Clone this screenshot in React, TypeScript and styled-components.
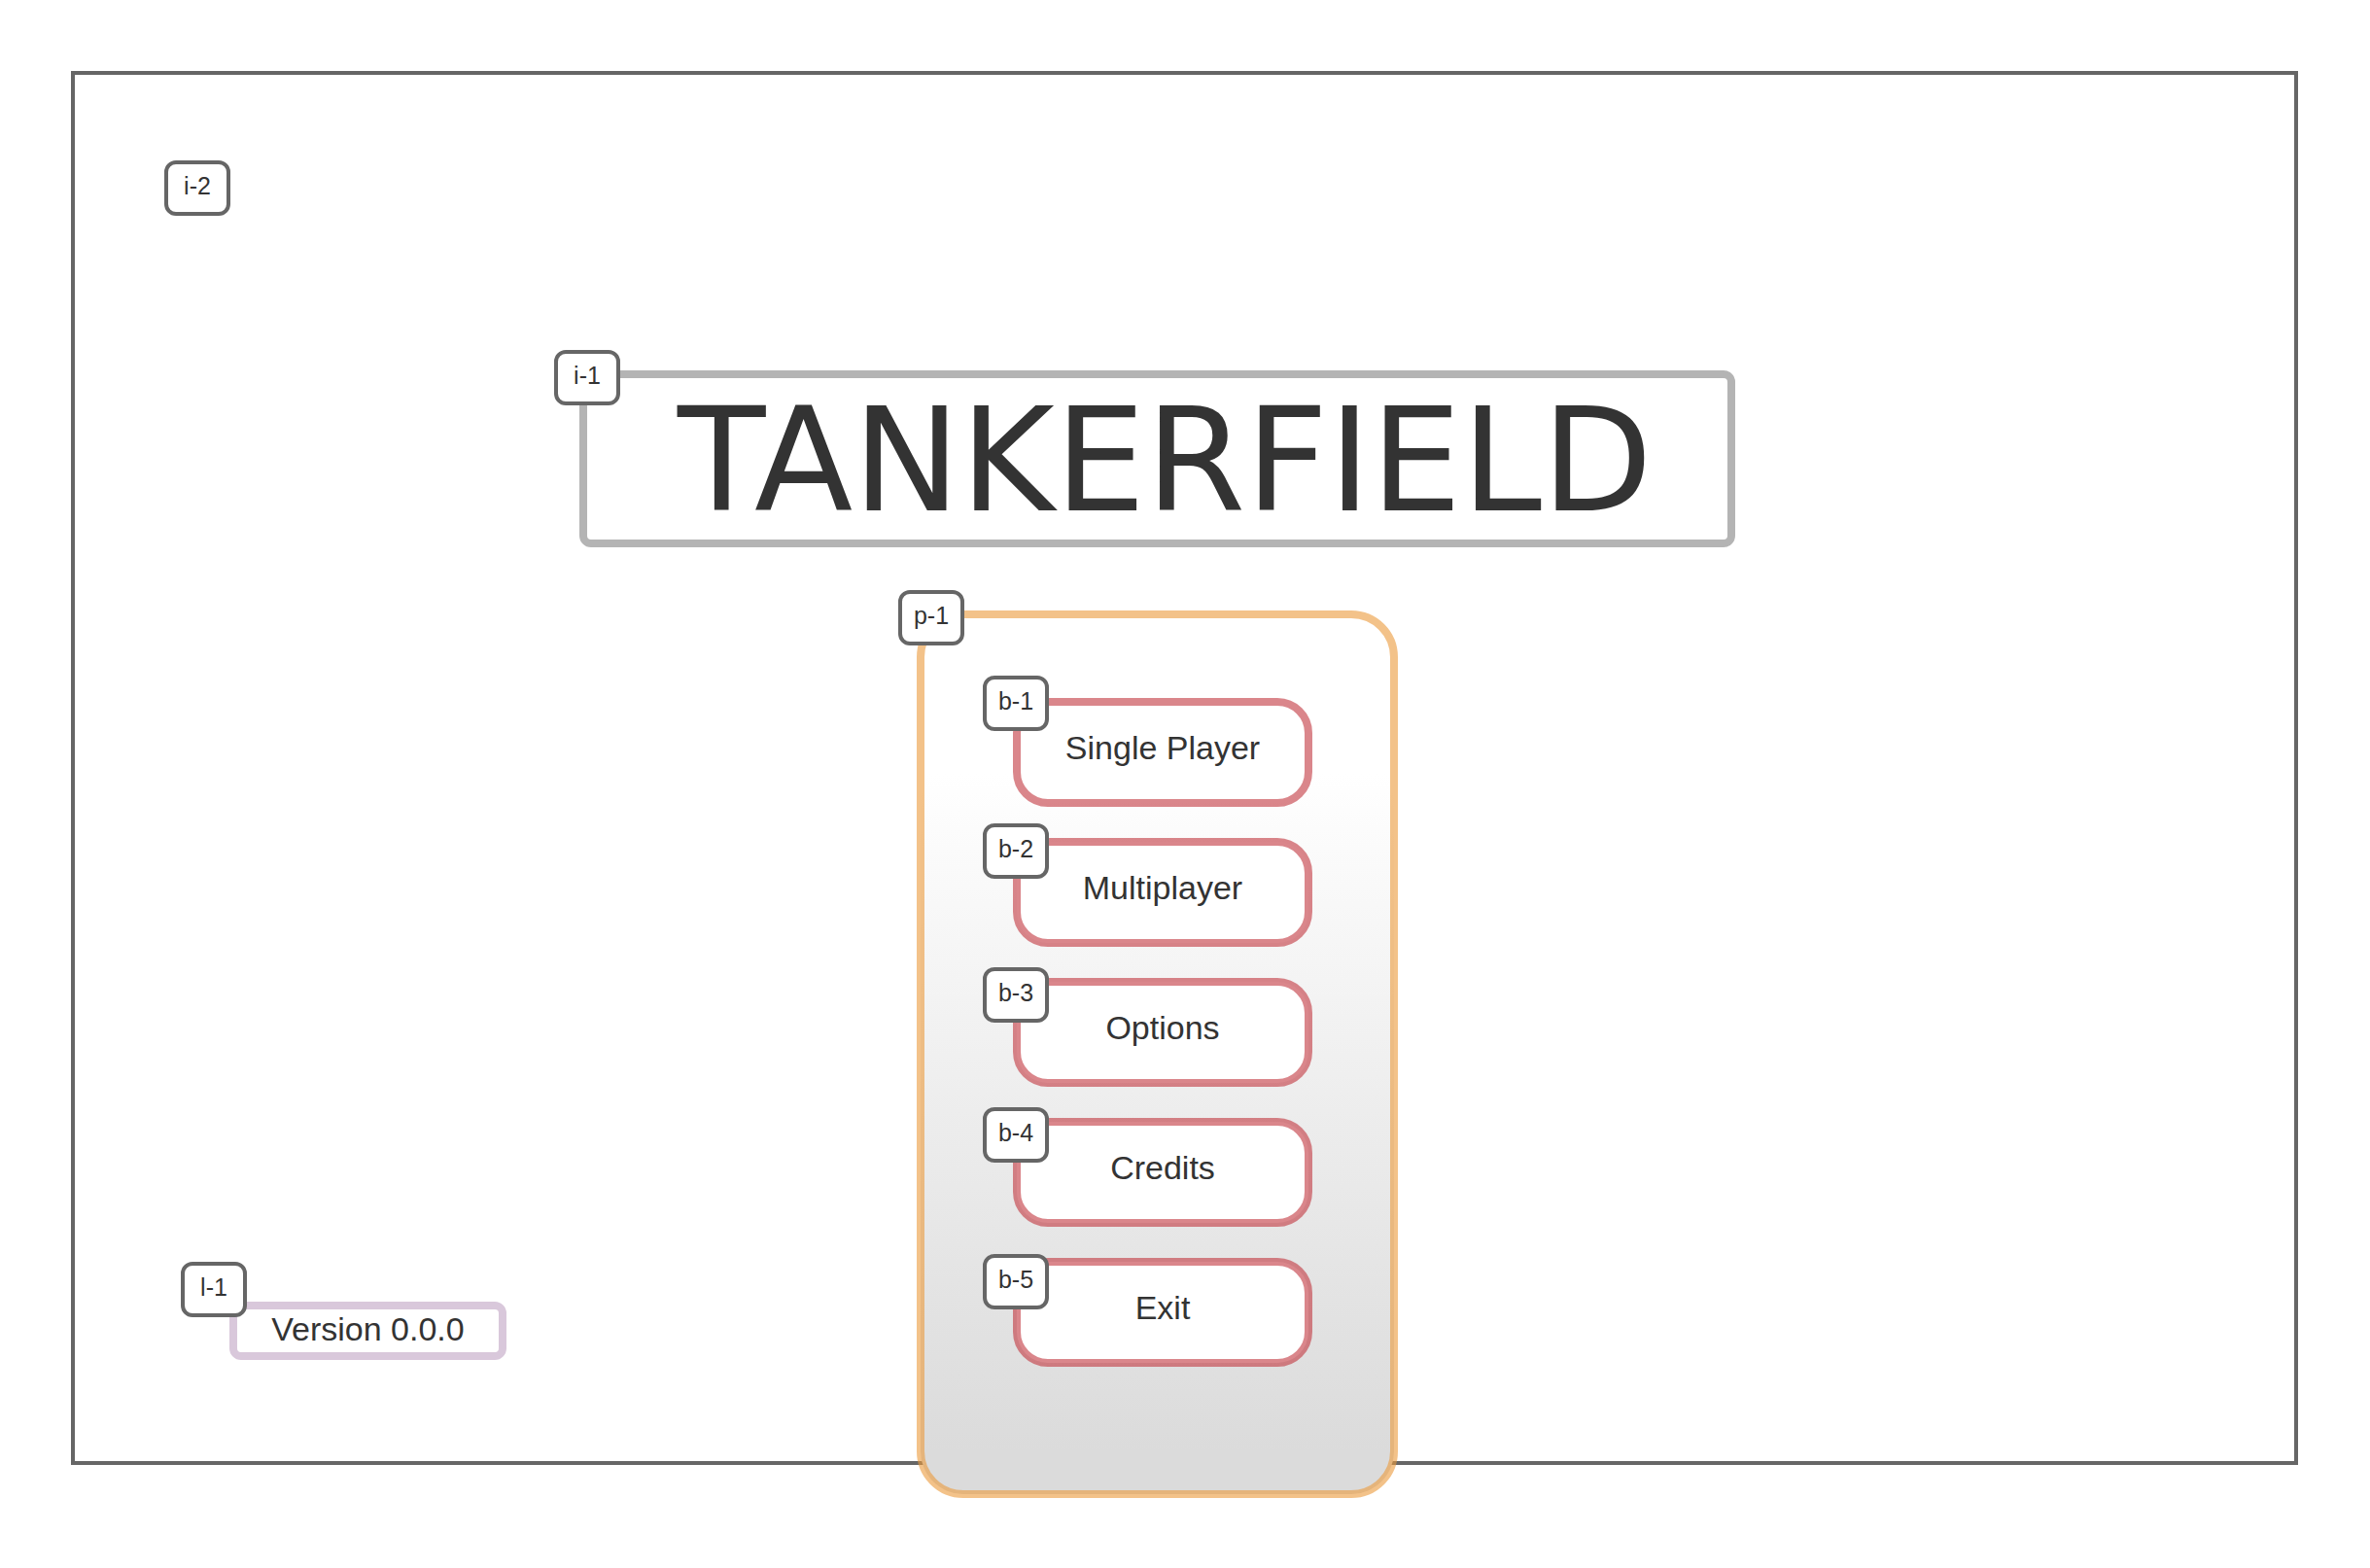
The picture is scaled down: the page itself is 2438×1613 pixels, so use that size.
import React from "react";
import styled, { createGlobalStyle } from "styled-components";

const GlobalStyle = createGlobalStyle`
  *, *::before, *::after { box-sizing: border-box; }
  body {
    margin: 0;
    background: #ffffff;
    color: #333333;
    font-family: "Liberation Sans", Arial, sans-serif;
  }
`;

const Page = styled.div`
  display: flex;
  min-height: 100vh;
  padding: 73px 74px 106px 73px;
`;

const Screen = styled.main`
  flex: 1;
  display: grid;
  grid-template-columns: 1fr auto 1fr;
  padding-right: 56px;
  border: 4px solid #666666;
`;

const Side = styled.aside`
  display: flex;
  flex-direction: column;
  justify-content: space-between;
  align-items: flex-start;
  padding: 88px 0 108px 92px;
`;

const Center = styled.div`
  display: flex;
  flex-direction: column;
  align-items: center;
  gap: 73px;
  padding-top: 308px;
`;

const Tag = styled.span`
  display: flex;
  align-items: center;
  justify-content: center;
  width: 68px;
  height: 57px;
  padding-bottom: 6px;
  border: 4px solid #666666;
  border-radius: 12px;
  background: #ffffff;
  font-size: 25px;
  line-height: 28px;
`;

const PinnedTag = styled(Tag)<{ $x: number; $y: number }>`
  position: absolute;
  z-index: 1;
  left: ${(p) => p.$x}px;
  top: ${(p) => p.$y}px;
`;

/* The translucent stroke straddles the edge of each outlined shape. */
const TitleBox = styled.header`
  position: relative;
  display: flex;
  align-items: center;
  justify-content: center;
  width: 1181px;
  height: 174px;
  padding: 4px 0 0 16px;
  border-radius: 8px;
  outline: 8px solid #b4b4b4;
  outline-offset: -4px;
`;

const Title = styled.h1`
  margin: 0;
  font-family: "DejaVu Sans", Verdana, sans-serif;
  font-size: 148px;
  font-weight: 400;
  line-height: 170px;
  white-space: nowrap;
`;

const Panel = styled.nav`
  position: relative;
  margin-bottom: -34px;
  padding: 90px 88px 135px 99px;
  border-radius: 44px;
  background: linear-gradient(#ffffff 18%, #dbdbdb 95%);
  outline: 8px solid rgba(235, 153, 58, 0.6);
  outline-offset: -4px;
`;

const Menu = styled.ul`
  display: flex;
  flex-direction: column;
  gap: 40px;
  margin: 0;
  padding: 0;
  list-style: none;
`;

const MenuItem = styled.li`
  position: relative;
`;

const MenuButton = styled.button`
  display: flex;
  align-items: center;
  justify-content: center;
  width: 300px;
  height: 104px;
  padding: 0 0 10px;
  border: 0;
  border-radius: 32px;
  background: #ffffff;
  color: inherit;
  font-family: inherit;
  font-size: 34px;
  line-height: 40px;
  outline: 8px solid rgba(193, 53, 62, 0.6);
  outline-offset: -4px;
  cursor: pointer;
`;

const Version = styled.div`
  position: relative;
  display: flex;
  align-items: center;
  justify-content: center;
  width: 277px;
  height: 52px;
  margin-left: 71px;
  padding-bottom: 4px;
  border-radius: 8px;
  outline: 8px solid #d9c8db;
  outline-offset: -4px;
  font-size: 34px;
  line-height: 40px;
`;

const items = [
  { tag: "b-1", label: "Single Player", y: -27 },
  { tag: "b-2", label: "Multiplayer", y: -19 },
  { tag: "b-3", label: "Options", y: -15 },
  { tag: "b-4", label: "Credits", y: -15 },
  { tag: "b-5", label: "Exit", y: -8 },
];

export default function App() {
  return (
    <>
      <GlobalStyle />
      <Page>
        <Screen>
          <Side>
            <Tag>i-2</Tag>
            <Version>
              <PinnedTag $x={-54} $y={-45}>l-1</PinnedTag>
              Version 0.0.0
            </Version>
          </Side>
          <Center>
            <TitleBox>
              <PinnedTag $x={-30} $y={-25}>i-1</PinnedTag>
              <Title>TANKERFIELD</Title>
            </TitleBox>
            <Panel>
              <PinnedTag $x={-23} $y={-25}>p-1</PinnedTag>
              <Menu>
                {items.map((item) => (
                  <MenuItem key={item.tag}>
                    <PinnedTag $x={-35} $y={item.y}>{item.tag}</PinnedTag>
                    <MenuButton type="button">{item.label}</MenuButton>
                  </MenuItem>
                ))}
              </Menu>
            </Panel>
          </Center>
        </Screen>
      </Page>
    </>
  );
}
